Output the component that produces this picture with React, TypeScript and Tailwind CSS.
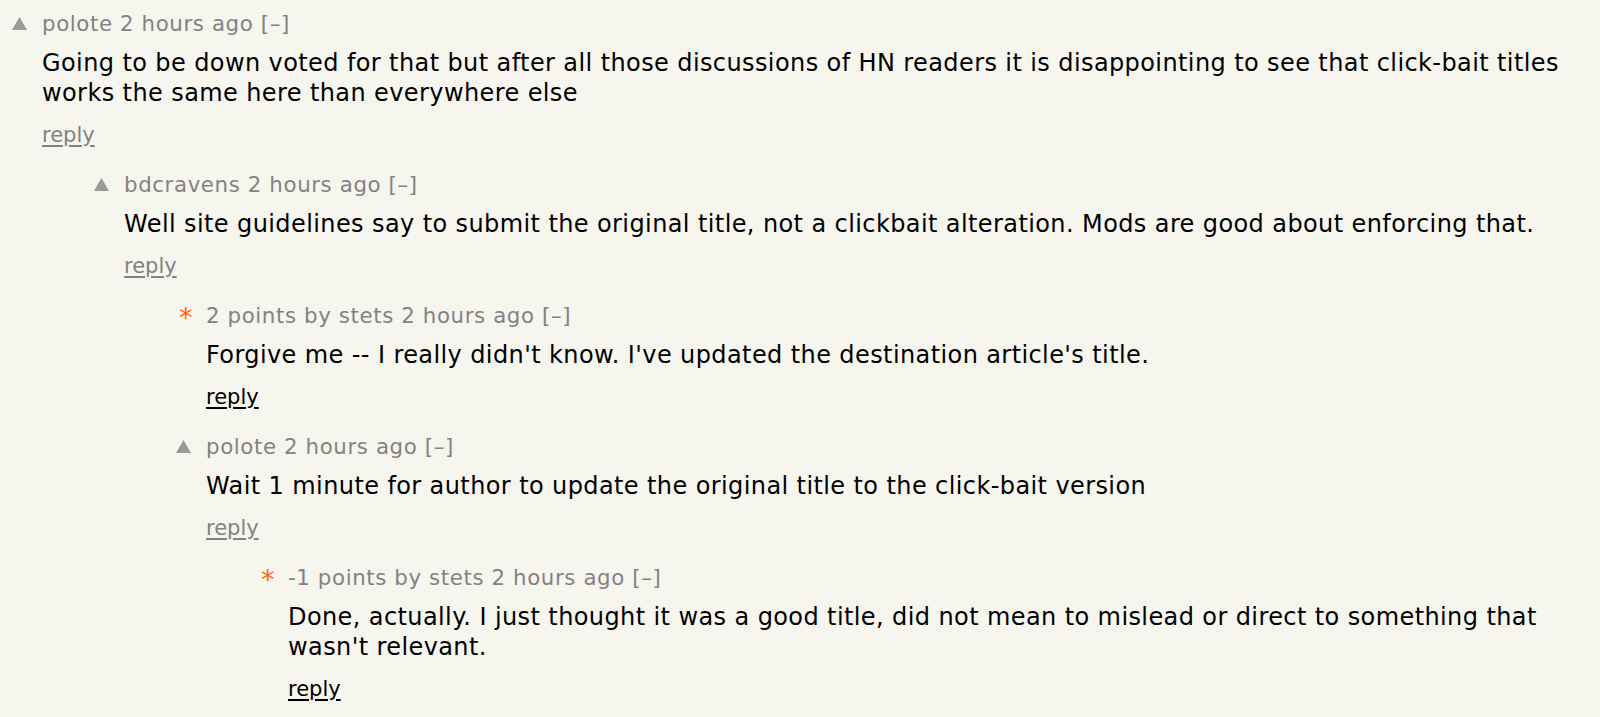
import React from 'react';

type Comment = {
  id: string;
  level: number;
  user: string;
  points?: string;
  op?: boolean;
  text: string;
  visited: boolean;
};

const comments: Comment[] = [
  {
    id: '1',
    level: 0,
    user: 'polote',
    text: 'Going to be down voted for that but after all those discussions of HN readers it is disappointing to see that click-bait titles works the same here than everywhere else',
    visited: true
  },
  {
    id: '2',
    level: 1,
    user: 'bdcravens',
    text: 'Well site guidelines say to submit the original title, not a clickbait alteration. Mods are good about enforcing that.',
    visited: true
  },
  {
    id: '3',
    level: 2,
    user: 'stets',
    points: '2 points',
    op: true,
    text: "Forgive me -- I really didn't know. I've updated the destination article's title.",
    visited: false
  },
  {
    id: '4',
    level: 2,
    user: 'polote',
    text: 'Wait 1 minute for author to update the original title to the click-bait version',
    visited: true
  },
  {
    id: '5',
    level: 3,
    user: 'stets',
    points: '-1 points',
    op: true,
    text: "Done, actually. I just thought it was a good title, did not mean to mislead or direct to something that wasn't relevant.",
    visited: false
  }
];

const indent = ['ml-0', 'ml-[82px]', 'ml-[164px]', 'ml-[246px]'];

const VoteArrow = () => (
  <svg width="15" height="13" viewBox="0 0 15 13" className="mt-[6px] ml-[2px]">
    <polygon points="7.5,0 15,13 0,13" fill="#9a9a9a" />
  </svg>
);

const CommentRow = ({ comment }: { comment: Comment }) => (
  <div className={`${indent[comment.level]} flex`}>
    <div className="w-[32px] shrink-0">
      {comment.op ? (
        <span className="block text-[27px] leading-[30px] text-[#ff6600] ml-[5px]">*</span>
      ) : (
        <VoteArrow />
      )}
    </div>
    <div className="flex-1 min-w-0">
      <div className="text-[21.33px] leading-[26px] tracking-[0.6px] text-[#828282]">
        {comment.points && <span>{comment.points} by </span>}
        <span>{comment.user}</span> <span>2 hours ago</span> <span>[–]</span>
      </div>
      <div className="mt-[11px] text-[24px] leading-[30px] tracking-[0.4px] text-black">
        {comment.text}
      </div>
      <div className="mt-[14px] text-[21px] leading-[26px]">
        <span
          className={`underline underline-offset-[3px] ${
            comment.visited ? 'text-[#828282]' : 'text-black'
          }`}
        >
          reply
        </span>
      </div>
    </div>
  </div>
);

export default function App() {
  return (
    <div
      className="min-h-screen bg-[#f6f6ef] pl-[10px] pr-[20px] pt-[11px] overflow-hidden"
      style={{ fontFamily: '"DejaVu Sans", Verdana, sans-serif' }}
    >
      <div className="flex flex-col gap-[24px]">
        {comments.map((c) => (
          <CommentRow key={c.id} comment={c} />
        ))}
      </div>
    </div>
  );
}
